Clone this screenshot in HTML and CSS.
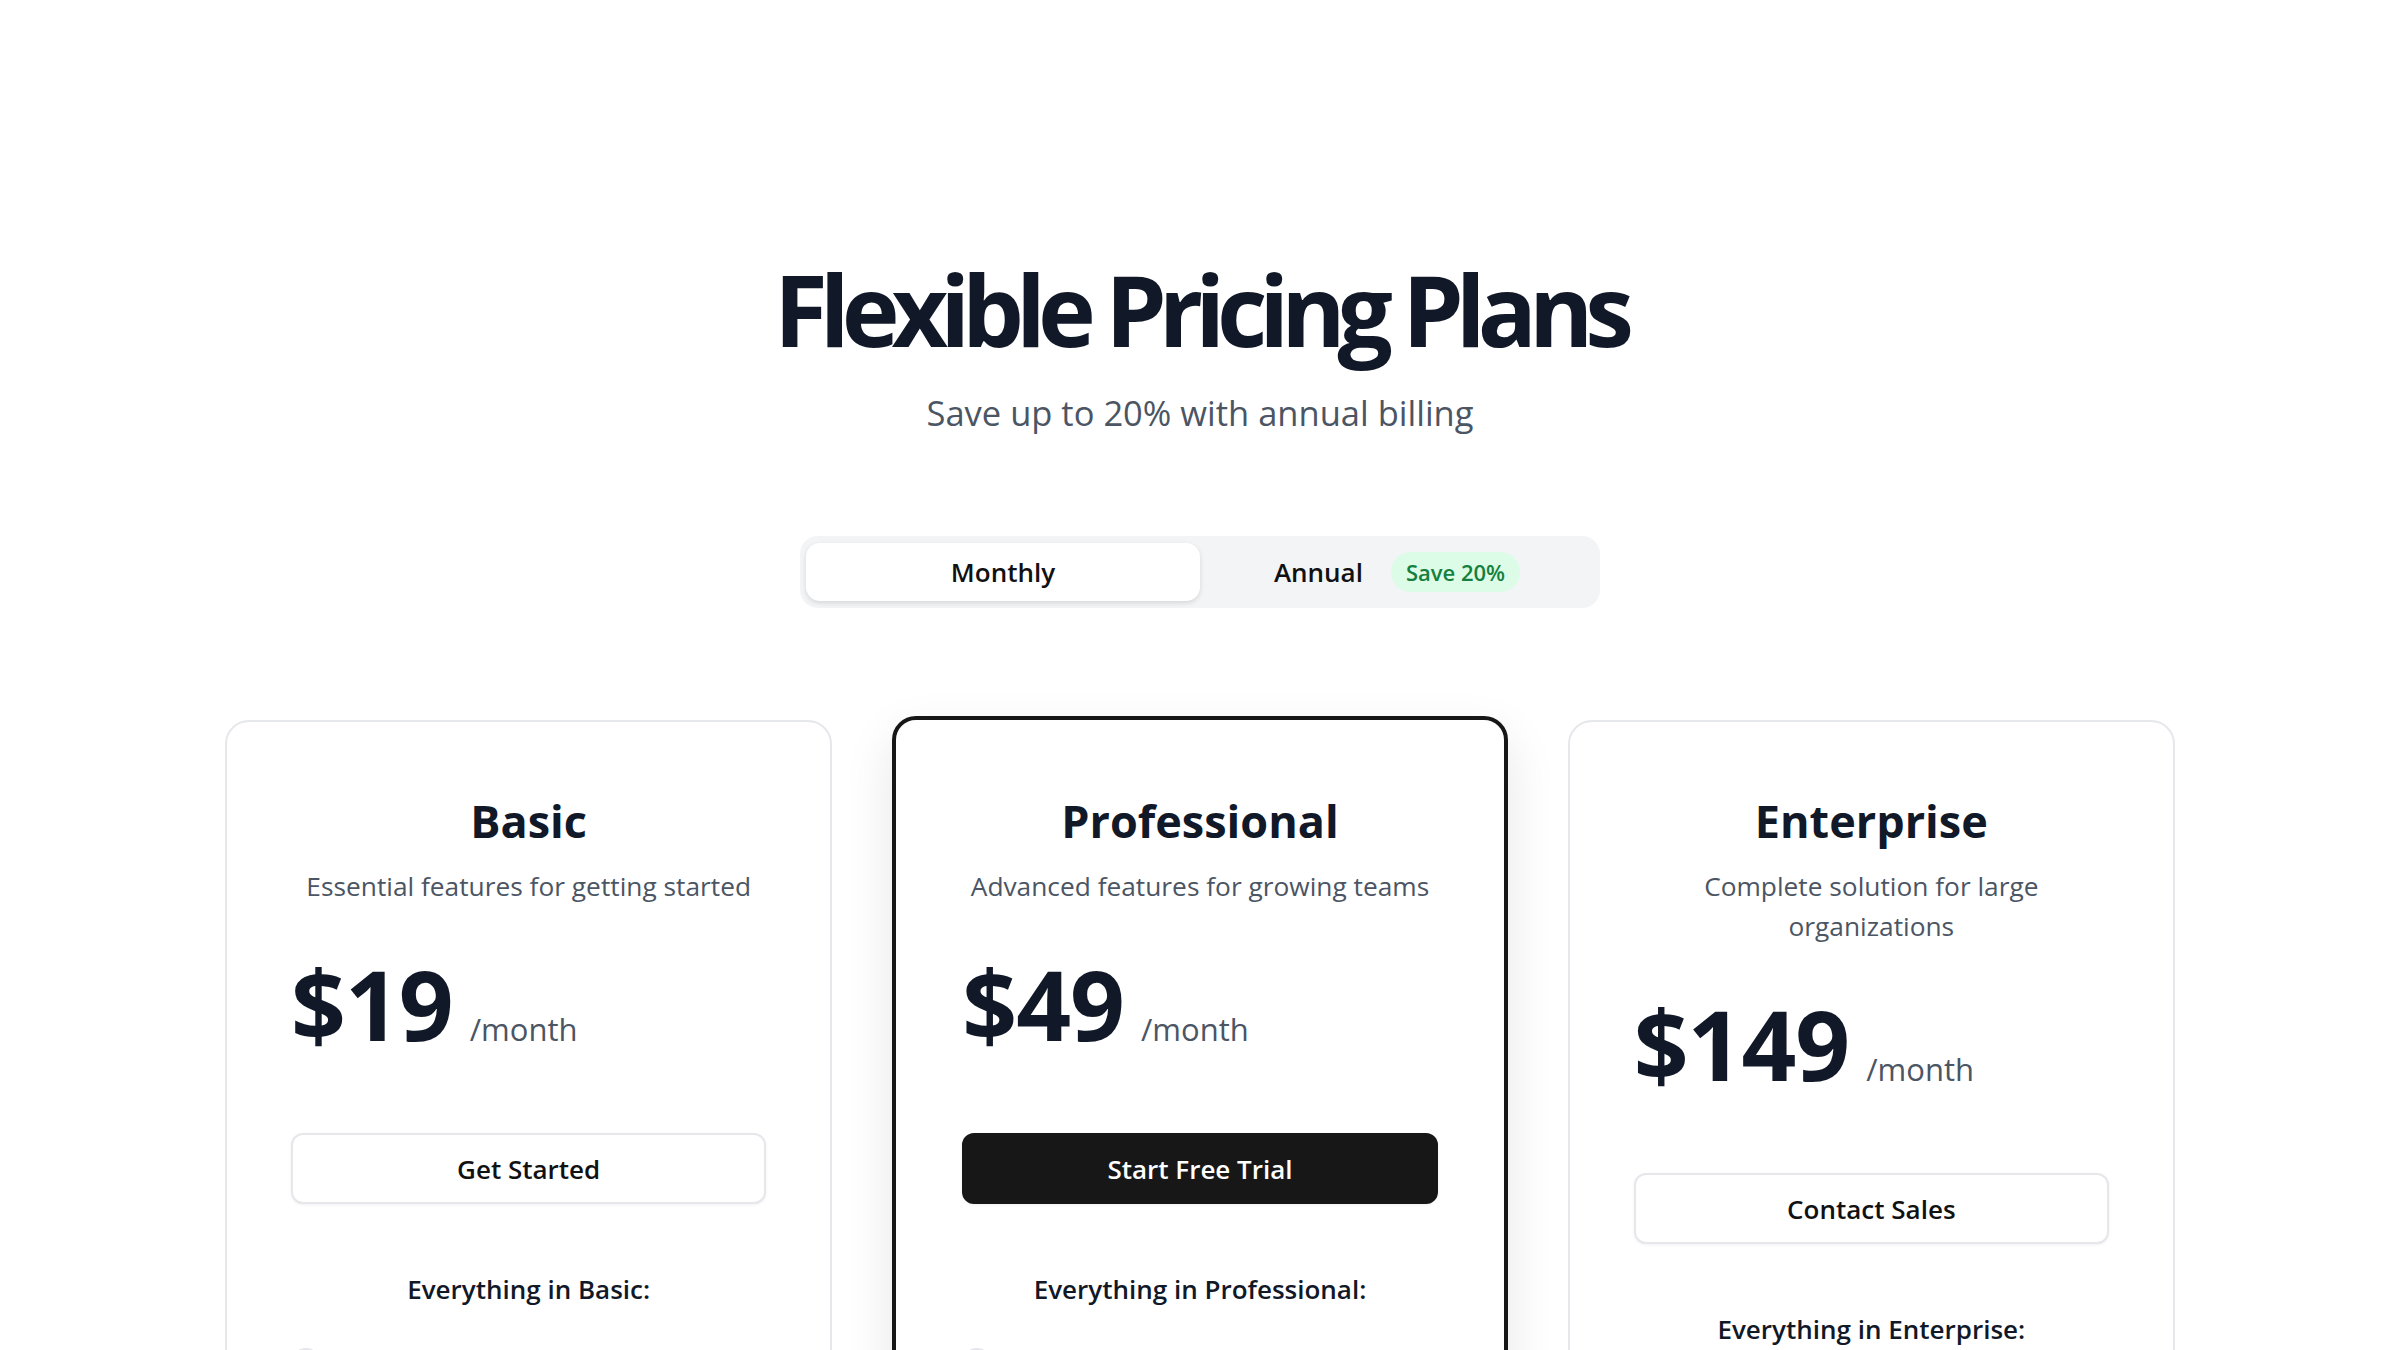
FILE: index.html
```html
<!DOCTYPE html>
<html lang="en">
<head>
<meta charset="utf-8">
<title>Flexible Pricing Plans</title>
<link rel="stylesheet" href="styles.css">
</head>
<body>
<main class="page">
  <header class="hero">
    <h1 class="hero-title">Flexible Pricing Plans</h1>
    <p class="hero-sub">Save up to 20% with annual billing</p>
  </header>

  <div class="billing-toggle">
    <button class="toggle-opt is-active" type="button">Monthly</button>
    <button class="toggle-opt" type="button">Annual <span class="save-badge">Save 20%</span></button>
  </div>

  <section class="plans">
    <article class="plan">
      <h2 class="plan-name">Basic</h2>
      <p class="plan-desc">Essential features for getting started</p>
      <div class="plan-price"><span class="price-amount">$19</span><span class="price-period">/month</span></div>
      <button class="plan-cta" type="button">Get Started</button>
      <h3 class="features-title">Everything in Basic:</h3>
      <ul class="features">
        <li class="feature"><span class="check"><svg viewBox="0 0 24 24"><path d="M5 12.5l4.5 4.5L19 7.5"/></svg></span>Up to 5 projects</li>
        <li class="feature"><span class="check"><svg viewBox="0 0 24 24"><path d="M5 12.5l4.5 4.5L19 7.5"/></svg></span>10 GB storage</li>
        <li class="feature"><span class="check"><svg viewBox="0 0 24 24"><path d="M5 12.5l4.5 4.5L19 7.5"/></svg></span>Email support</li>
      </ul>
    </article>

    <article class="plan plan--featured">
      <h2 class="plan-name">Professional</h2>
      <p class="plan-desc">Advanced features for growing teams</p>
      <div class="plan-price"><span class="price-amount">$49</span><span class="price-period">/month</span></div>
      <button class="plan-cta plan-cta--primary" type="button">Start Free Trial</button>
      <h3 class="features-title">Everything in Professional:</h3>
      <ul class="features">
        <li class="feature"><span class="check"><svg viewBox="0 0 24 24"><path d="M5 12.5l4.5 4.5L19 7.5"/></svg></span>Unlimited projects</li>
        <li class="feature"><span class="check"><svg viewBox="0 0 24 24"><path d="M5 12.5l4.5 4.5L19 7.5"/></svg></span>100 GB storage</li>
        <li class="feature"><span class="check"><svg viewBox="0 0 24 24"><path d="M5 12.5l4.5 4.5L19 7.5"/></svg></span>Priority support</li>
      </ul>
    </article>

    <article class="plan">
      <h2 class="plan-name">Enterprise</h2>
      <p class="plan-desc">Complete solution for large organizations</p>
      <div class="plan-price"><span class="price-amount">$149</span><span class="price-period">/month</span></div>
      <button class="plan-cta" type="button">Contact Sales</button>
      <h3 class="features-title">Everything in Enterprise:</h3>
      <ul class="features">
        <li class="feature"><span class="check"><svg viewBox="0 0 24 24"><path d="M5 12.5l4.5 4.5L19 7.5"/></svg></span>Unlimited everything</li>
        <li class="feature"><span class="check"><svg viewBox="0 0 24 24"><path d="M5 12.5l4.5 4.5L19 7.5"/></svg></span>Dedicated manager</li>
        <li class="feature"><span class="check"><svg viewBox="0 0 24 24"><path d="M5 12.5l4.5 4.5L19 7.5"/></svg></span>Custom integrations</li>
      </ul>
    </article>
  </section>
</main>
</body>
</html>
```

FILE: styles.css
```css
html, body {
  margin: 0;
  padding: 0;
  background: #ffffff;
}

html {
  overflow: hidden;
}

body {
  font-family: "Open Sans", "Noto Sans", sans-serif;
  color: #111827;
}

.page {
  padding: 256px 0 120px;
}

.hero {
  text-align: center;
}

.hero-title {
  margin: 0;
  font-size: 98px;
  font-weight: 700;
  line-height: 1.1;
  letter-spacing: -0.082em;
  color: #111827;
}

.hero-sub {
  margin: 23px 0 0;
  font-size: 34.5px;
  line-height: 1.5;
  color: #4b5563;
}

.billing-toggle {
  box-sizing: border-box;
  width: 800px;
  height: 72px;
  margin: 97px auto 0;
  padding: 7px 6px;
  display: flex;
  background: #f3f4f6;
  border-radius: 18px;
}

.toggle-opt {
  flex: 1;
  display: flex;
  align-items: center;
  justify-content: center;
  gap: 28px;
  padding: 0;
  border: 0;
  border-radius: 14px;
  background: transparent;
  font-family: "Open Sans", "Noto Sans", sans-serif;
  font-size: 26px;
  font-weight: 600;
  color: #111111;
}

.toggle-opt.is-active {
  background: #ffffff;
  box-shadow: 0 2px 5px rgba(0, 0, 0, 0.12);
}

.save-badge {
  display: inline-flex;
  align-items: center;
  height: 40px;
  padding: 0 15px;
  border-radius: 20px;
  background: #dcfce7;
  color: #15803d;
  font-size: 22px;
  font-weight: 600;
}

.plans {
  display: grid;
  grid-template-columns: repeat(3, 1fr);
  gap: 64px;
  max-width: 1950px;
  margin: 112px auto 0;
  align-items: start;
}

.plan {
  display: flex;
  flex-direction: column;
  padding: 64px;
  border: 2px solid #e5e7eb;
  border-radius: 24px;
  background: #ffffff;
}

.plan--featured {
  margin: -4px;
  padding: 66px;
  border: 4px solid #171717;
  box-shadow: 0 20px 50px rgba(0, 0, 0, 0.1);
}

.plan-name {
  margin: 6px 0 0;
  font-size: 45px;
  font-weight: 700;
  line-height: 1.3;
  text-align: center;
  color: #111827;
}

.plan-desc {
  margin: 16px 0 0;
  font-size: 26.3px;
  line-height: 40px;
  text-align: center;
  color: #4b5563;
}

.plan-price {
  display: flex;
  align-items: baseline;
  margin-top: 50px;
}

.price-amount {
  font-size: 96px;
  font-weight: 700;
  line-height: 1;
  letter-spacing: -1px;
  color: #111827;
}

.price-period {
  margin-left: 17px;
  font-size: 31px;
  color: #4b5563;
}

.plan-cta {
  height: 71px;
  margin-top: 81px;
  border: 2px solid #e5e7eb;
  border-radius: 12px;
  background: #ffffff;
  box-shadow: 0 1px 3px rgba(0, 0, 0, 0.06);
  font-family: "Open Sans", "Noto Sans", sans-serif;
  font-size: 26px;
  font-weight: 600;
  color: #111111;
}

.plan-cta--primary {
  background: #171717;
  border-color: #171717;
  color: #ffffff;
}

.features-title {
  margin: 66px 0 0;
  font-size: 26px;
  font-weight: 600;
  line-height: 39px;
  text-align: center;
  color: #111827;
}

.features {
  display: flex;
  flex-direction: column;
  gap: 24px;
  margin: 37px 0 0;
  padding: 0;
  list-style: none;
}

.feature {
  display: flex;
  align-items: center;
  gap: 16px;
  font-size: 24px;
  color: #374151;
}

.check {
  display: inline-flex;
  align-items: center;
  justify-content: center;
  width: 30px;
  height: 30px;
  border-radius: 50%;
  background: #e5e7eb;
}

.check svg {
  width: 18px;
  height: 18px;
  fill: none;
  stroke: #374151;
  stroke-width: 2.5;
  stroke-linecap: round;
  stroke-linejoin: round;
}
```
